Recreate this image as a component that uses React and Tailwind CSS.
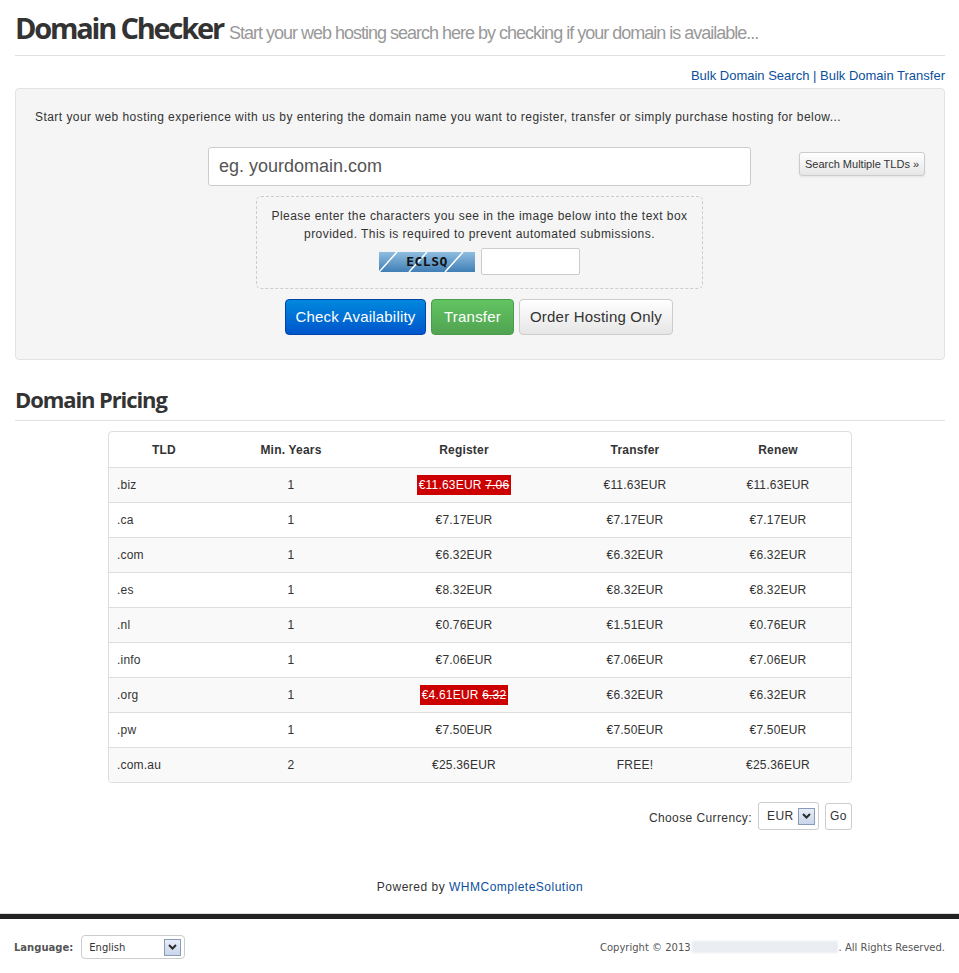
import React from "react"

const rows = [
  [".biz", "1", { promo: "€11.63EUR", old: "7.06" }, "€11.63EUR", "€11.63EUR"],
  [".ca", "1", "€7.17EUR", "€7.17EUR", "€7.17EUR"],
  [".com", "1", "€6.32EUR", "€6.32EUR", "€6.32EUR"],
  [".es", "1", "€8.32EUR", "€8.32EUR", "€8.32EUR"],
  [".nl", "1", "€0.76EUR", "€1.51EUR", "€0.76EUR"],
  [".info", "1", "€7.06EUR", "€7.06EUR", "€7.06EUR"],
  [".org", "1", { promo: "€4.61EUR", old: "6.32" }, "€6.32EUR", "€6.32EUR"],
  [".pw", "1", "€7.50EUR", "€7.50EUR", "€7.50EUR"],
  [".com.au", "2", "€25.36EUR", "FREE!", "€25.36EUR"],
]

function SelectArrow() {
  return (
    <span className="flex h-[17px] w-[17px] items-center justify-center border border-[#8a9bb5] bg-gradient-to-b from-[#e8eef8] to-[#c9d5ea]">
      <svg width="9" height="6" viewBox="0 0 9 6">
        <path d="M1 1 L4.5 4.5 L8 1" fill="none" stroke="#2b2b2b" strokeWidth="2" />
      </svg>
    </span>
  )
}

function Captcha() {
  return (
    <div className="relative flex h-[20px] w-[96px] items-center justify-center overflow-hidden bg-gradient-to-b from-[#8fbde0] to-[#3f7fb5]">
      <svg className="absolute inset-0" width="96" height="20" viewBox="0 0 96 20">
        <path d="M0 20 L18 0 M30 20 L48 0 M66 20 L84 0" stroke="#ffffff" strokeWidth="1.5" />
      </svg>
      <span className="relative font-['DejaVu_Sans_Mono',monospace] text-[13px] font-bold text-[#111]">ECLSQ</span>
    </div>
  )
}

export default function App() {
  return (
    <div className="min-h-[973px] bg-white font-['Liberation_Sans',Arial,sans-serif] text-[#333]">
      <div className="ml-[15px] w-[930px]">
        <div className="flex items-baseline gap-[6px] border-b border-[#e0e0e0] pt-[10px] pb-[8px]">
          <h1 className="font-['Open_Sans',sans-serif] text-[29px] leading-[36px] font-bold tracking-[-2.2px] text-[#333]">
            Domain Checker
          </h1>
          <span className="text-[18px] tracking-[-1px] text-[#999]">
            Start your web hosting search here by checking if your domain is available...
          </span>
        </div>

        <div className="mt-[12px] text-right text-[13px] leading-[15px] text-[#0b4f9c]">
          <a>Bulk Domain Search</a> | <a>Bulk Domain Transfer</a>
        </div>

        <div className="mt-[5px] rounded-[4px] border border-[#e3e3e3] bg-[#f5f5f5] px-[19px] pt-[20px] pb-[24px]">
          <p className="text-[12px] leading-[17px] tracking-[0.45px] text-[#333]">
            Start your web hosting experience with us by entering the domain name you want to register, transfer or simply purchase hosting for below...
          </p>

          <div className="mt-[21px] flex items-start">
            <div className="ml-[173px] flex h-[39px] w-[543px] items-center rounded-[3px] border border-[#ccc] bg-white px-[10px] text-[18px] text-[#555]">
              eg. yourdomain.com
            </div>
            <button className="ml-[48px] mt-[5px] h-[24px] w-[126px] rounded-[3px] border border-[#ccc] bg-gradient-to-b from-white to-[#e6e6e6] text-[11px] text-[#333] shadow-[0_1px_2px_rgba(0,0,0,0.08)]">
              Search Multiple TLDs »
            </button>
          </div>

          <div className="mt-[10px] ml-[221px] w-[447px] rounded-[5px] border border-dashed border-[#ccc] px-[8px] pt-[10px] pb-[13px] text-center text-[12px] leading-[18px] tracking-[0.45px] text-[#333]">
            <p>
              Please enter the characters you see in the image below into the text box provided. This is required to prevent automated submissions.
            </p>
            <div className="mt-[5px] flex items-center justify-center gap-[6px]">
              <Captcha />
              <div className="h-[27px] w-[99px] rounded-[2px] border border-[#ccc] bg-white" />
            </div>
          </div>

          <div className="mt-[10px] flex justify-center gap-[5px] pr-[2px] tracking-[0.2px]">
            <button className="h-[36px] w-[141px] rounded-[4px] border border-[#0044aa] bg-gradient-to-b from-[#0088dd] to-[#0055cc] text-[15px] text-white">
              Check Availability
            </button>
            <button className="h-[36px] w-[83px] rounded-[4px] border border-[#4a9c4a] bg-gradient-to-b from-[#62c462] to-[#51a351] text-[15px] text-white">
              Transfer
            </button>
            <button className="h-[36px] w-[154px] rounded-[4px] border border-[#ccc] bg-gradient-to-b from-white to-[#e6e6e6] text-[15px] text-[#333]">
              Order Hosting Only
            </button>
          </div>
        </div>

        <h2 className="mt-[26px] border-b border-[#e0e0e0] pb-[8px] font-['Open_Sans',sans-serif] text-[22px] leading-[26px] font-bold tracking-[-1.1px] text-[#333]">
          Domain Pricing
        </h2>

        <div className="mt-[10px] ml-[93px] w-[744px] overflow-hidden rounded-[4px] border border-[#ddd] tracking-[0.2px]">
          <div className="grid h-[35px] grid-cols-[110px_144px_202px_140px_1fr] items-center text-center text-[12px] font-bold text-[#333]">
            <div>TLD</div>
            <div>Min. Years</div>
            <div>Register</div>
            <div>Transfer</div>
            <div>Renew</div>
          </div>
          {rows.map((r, i) => (
            <div
              key={r[0]}
              className={`grid h-[35px] grid-cols-[110px_144px_202px_140px_1fr] items-center border-t border-[#ddd] text-center text-[12px] text-[#333] ${i % 2 === 0 ? "bg-[#f9f9f9]" : "bg-white"}`}
            >
              <div className="pl-[8px] text-left">{r[0]}</div>
              <div>{r[1]}</div>
              <div>
                {typeof r[2] === "object" ? (
                  <span className="inline-block bg-[#cc0000] px-[2px] leading-[20px] text-white">
                    {r[2].promo} <s>{r[2].old}</s>
                  </span>
                ) : (
                  r[2]
                )}
              </div>
              <div>{r[3]}</div>
              <div>{r[4]}</div>
            </div>
          ))}
        </div>

        <div className="mt-[19px] mr-[93px] flex items-center justify-end gap-[6px] text-[12px] tracking-[0.4px] text-[#333]">
          <span className="mt-[3px]">Choose Currency:</span>
          <div className="flex h-[28px] w-[61px] items-center justify-between rounded-[3px] border border-[#ccc] bg-white pl-[8px] pr-[3px]">
            <span>EUR</span>
            <SelectArrow />
          </div>
          <button className="h-[27px] w-[27px] rounded-[3px] border border-[#ccc] bg-white text-[12px] text-[#333]">Go</button>
        </div>

        <div className="mt-[48px] text-center text-[12px] tracking-[0.5px] text-[#333]">
          Powered by <a className="text-[#0b4f9c]">WHMCompleteSolution</a>
        </div>
      </div>

      <div className="mt-[17px] h-[6px] border-t border-[#ddd] border-b-[5px] border-b-[#222]" />

      <div className="flex items-center justify-between px-[14px] pt-[16px] font-['DejaVu_Sans',Tahoma,sans-serif] text-[10px] text-[#555]">
        <div className="flex items-center gap-[8px]">
          <span className="font-bold">Language:</span>
          <div className="flex h-[24px] w-[104px] items-center justify-between rounded-[4px] border border-[#ccc] bg-white pl-[7px] pr-[3px] text-[#333]">
            <span>English</span>
            <SelectArrow />
          </div>
        </div>
        <div className="flex items-center">
          Copyright © 2013
          <span className="mx-[1px] inline-block h-[12px] w-[146px] bg-[#e9ecf0] blur-[1px]" />
          . All Rights Reserved.
        </div>
      </div>
    </div>
  )
}
